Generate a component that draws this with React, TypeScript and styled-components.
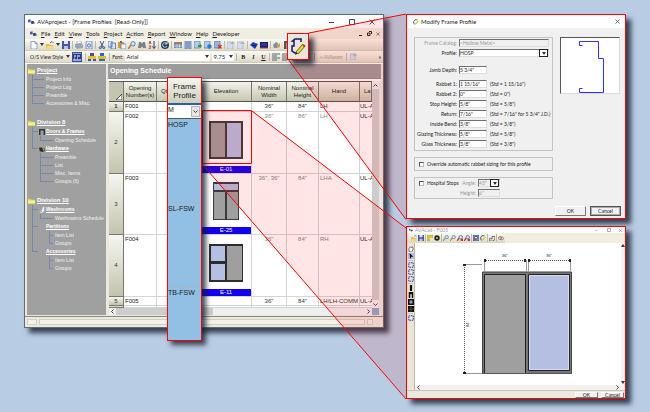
import React from "react";
import styled, { createGlobalStyle, css } from "styled-components";

const GlobalStyle = createGlobalStyle`
  * { box-sizing: border-box; }
  body { margin: 0; background: #b8cce4; font-family: "Liberation Sans", Arial, sans-serif; color: #222; }
  button, input, select { font: inherit; color: inherit; margin: 0; padding: 0; border: 0; border-radius: 0; background: none; min-width: 0; }
  svg { display: block; flex: none; }
  a { color: inherit; }
  ul { list-style: none; margin: 0; padding: 0; }
`;

const ui = `"Lato", "Liberation Sans", sans-serif`;

/* ---------- small drawings ---------- */

const glyphs: Record<string, React.ReactNode> = {
  app: <><path d="M0 2h3v3H0z" fill="#3b5fa8" /><path d="M3 4l3-1 2 3-4 1z" fill="#34466e" /><path d="M1 1h2v1H1z" fill="#8aa2d6" /></>,
  new: <><path d="M1 .5h4l2 2V8H1z" fill="#fff" stroke="#6c83b5" strokeWidth=".7" /><path d="M5 .5v2h2" fill="none" stroke="#6c83b5" strokeWidth=".7" /></>,
  open: <><path d="M0 3h3l1 1h3v4H0z" fill="#e7b93c" /><path d="M1 5h7L6.500 8H0z" fill="#f6d97c" /><path d="M4 2l2-1.500L7.500 2" fill="none" stroke="#3c66b8" /></>,
  save: <><path d="M0 0h8v8H0z" fill="#4458a6" /><path d="M2 0h4v3H2z" fill="#dfe6f8" /><path d="M2 5h4v3H2z" fill="#b8c4e6" /></>,
  print: <><path d="M2 0h4l1 3H2z" fill="#fff" stroke="#8b93a5" strokeWidth=".6" /><path d="M0 3l6-1 2 2v3L2 8 0 6z" fill="#9ba3b8" /></>,
  preview: <><path d="M2 0h5v8H1V1z" fill="#dfe9fa" stroke="#5d83c0" strokeWidth=".8" /><circle cx="4" cy="4.500" r="1.600" fill="none" stroke="#335c9e" strokeWidth=".8" /></>,
  cut: <><path d="M2 0l3 6M6 0L3 6" stroke="#40527d" fill="none" /><circle cx="2.300" cy="6.700" r="1" fill="none" stroke="#2a4daa" /><circle cx="5.700" cy="6.700" r="1" fill="none" stroke="#2a4daa" /></>,
  copy: <><path d="M0 0h4v6H0zM3 2h4.500v6H3z" fill="#d9e5fb" stroke="#456fb8" strokeWidth=".8" /></>,
  paste: <><path d="M0 1h6v6H0z" fill="#d9993b" /><path d="M2 0h2v2H2z" fill="#6d6a62" /><path d="M3 3h5v5H3z" fill="#f4f6fc" stroke="#5577b7" strokeWidth=".7" /></>,
  find: <><path d="M0 8l3-4" stroke="#c9773a" strokeWidth="1.500" /><circle cx="5" cy="2.800" r="2.200" fill="#d3e6fa" stroke="#4d75aa" strokeWidth=".9" /></>,
  binoc: <><path d="M1 1h2l1 2 1-2h2l1 6H5L4 5 3 7H0z" fill="#7a7f8c" /></>,
  sort: <><path d="M1 3l1-3 1 3M1 5h2L1 8h2" fill="none" stroke="#b23a36" strokeWidth=".9" /><path d="M6 0v7M4.500 5.500L6 7.500l1.500-2" fill="none" stroke="#2b3b6d" strokeWidth="1" /></>,
  refresh: <><circle cx="4" cy="4" r="4" fill="#25405a" /><path d="M6 3A2.300 2.300 0 1 0 6 5M6 1v2H4" fill="none" stroke="#e0eaf1" strokeWidth=".9" /></>,
  table: <><path d="M0 1h8v6H0z" fill="#6e8fca" /><path d="M0 1h8v2H0z" fill="#b07d4a" /><path d="M3 3v4M5.500 3v4M0 5h8" stroke="#e9effa" strokeWidth=".6" /></>,
  page: <><path d="M1 0h6v8H1z" fill="#a4bbe2" stroke="#5273ae" strokeWidth=".7" /><path d="M2 2h4M2 4h4M2 6h4" stroke="#48659b" strokeWidth=".7" /></>,
  pageGo: <><path d="M0 0h6v7H0z" fill="#b5c8ea" stroke="#5273ae" strokeWidth=".7" /><path d="M4 4h2V2.500L8 5 6 7.500V6H4z" fill="#2f9a46" /></>,
  pageIn: <><path d="M0 0h6v7H0z" fill="#b5c8ea" stroke="#5273ae" strokeWidth=".7" /><circle cx="5.500" cy="5.500" r="2.200" fill="#3777c9" /></>,
  pageDel: <><path d="M0 0h6v7H0z" fill="#9fb3da" stroke="#5273ae" strokeWidth=".7" /><path d="M4 4l3.500 3.500M7.500 4L4 7.500" stroke="#c3302b" strokeWidth="1.200" /></>,
  faded: <><path d="M0 1h6v7H0z" fill="#d5dcea" stroke="#9fb0cc" strokeWidth=".7" /><path d="M3 3l3-3 2 3z" fill="#a9b8d0" /></>,
  tag: <><path d="M0 4l3-3 5 2-3 5z" fill="#1e3fc4" /><path d="M2 4l4 1" stroke="#081c76" /></>,
  book: <><path d="M0 1h8v6H0z" fill="#1a1e5e" /><path d="M1 2h6v3H1z" fill="#2c35a0" /><path d="M0 7h8" stroke="#a44" /></>,
  gear: <><path d="M0 4l3-3 2 1-1 5H1z" fill="#7f8cae" /><path d="M4 4l3-2v4L4 7z" fill="#d7a13a" /></>,
  door: <><path d="M1 0h6v8H1z" fill="#555" /><path d="M3 2h2v6H3z" fill="#999" /></>,
  grid: <><path d="M0 1h8v5H0z" fill="#2a3c7a" /><path d="M1 3h2M4 3h3M1 5h1M4 5h1" stroke="#fff" /></>,
  treeA: <><path d="M2 0h4v3H2zM0 5h3v3H0zM5 5h3v3H5z" fill="#2b55c7" /><path d="M0 3h8v3H0z" fill="#eac41f" /><path d="M3 0l3 3" stroke="#d22" /></>,
  treeB: <><path d="M2 0h4v3H2zM1 5h6v3H1z" fill="#2768cf" /><path d="M0 3h8v3H0z" fill="#e4bd20" /></>,
  left: <path d="M0 1h8M0 3h5M0 5h8M0 7h5" stroke="#4b5066" strokeWidth=".9" />,
  folder: <><path d="M0 2h3l1 1h4v5H0z" fill="#ddd65c" /><path d="M0 4h8v3H0z" fill="#f5f08b" /></>,
  frame: <path d="M0 0h8v8H6V2H2v6H0z" fill="#333" />,
  lock: <><path d="M0 2h4l1 2 2-1 1 3-3 2-4-1z" fill="#332f24" /><path d="M5 4h2v2H5z" fill="#bfa52e" /></>,
  wash: <><path d="M5 0h2v5L4 8 1 7V5l3-1z" fill="#eee" /><path d="M1 5l3 1" stroke="#777" /></>,
  hand: <path d="M1 4l2-3 1 1 2-1 1 3-2 4H2z" fill="#fff" stroke="#333" strokeWidth=".9" />,
  arrow: <><path d="M0 0h8v8H0z" fill="#a9bde6" /><path d="M2 0l5 5H4.500L3 8z" fill="#111" /></>,
  box: <path d="M1 1h6v6H1z" fill="none" stroke="#2b43b5" strokeWidth="1.400" strokeDasharray="2 1" />,
  post: <path d="M2.500 0h3v8h-3z" fill="#111" />,
  jamb: <path d="M1 0h6v8H5V3H3v5H1z" fill="#111" />,
  window: <><path d="M0 0h8v8H0z" fill="#111" /><path d="M2 2h4v4H2z" fill="#79a7d8" /></>,
  zoomBox: <><path d="M0 0h8v8H0z" fill="#86a4dc" stroke="#29468f" /><circle cx="4" cy="3.500" r="2" fill="#fff" stroke="#222" /><path d="M2 7l1-2" stroke="#222" /></>,
  quad: <><path d="M0 0h8v8H0z" fill="#111" /><path d="M4 0v8M0 4h8" stroke="#777" strokeWidth=".7" /></>,
  swatch: <><path d="M0 0h8v3H3v5H0z" fill="#e6d12f" stroke="#77691c" strokeWidth=".5" /></>,
  disc: <><circle cx="4" cy="4" r="3.600" fill="#222" /><circle cx="4" cy="4" r="1.300" fill="#e5d84f" /></>,
  zoomRed: <><path d="M0 8l3-4" stroke="#c33" strokeWidth="1.800" /><circle cx="5" cy="3" r="2.300" fill="#d3e6fa" stroke="#36589a" strokeWidth=".9" /><path d="M5 5h3v3H5z" fill="#c33" /></>,
  sketch: <><path d="M0 5h4V2h4v4L5 8H0z" fill="#ddd" stroke="#333" strokeWidth=".8" /></>,
  rings: <><circle cx="2.700" cy="4" r="2" fill="none" stroke="#b55" /><circle cx="5.300" cy="4.500" r="2" fill="none" stroke="#777" /></>,
  pencilProfile: <><path d="M6 1H2.500L1 3v3l1.500 1" fill="none" stroke="#225" /><path d="M7.500 2.500L3 7" stroke="#dcc21e" strokeWidth="1.500" /></>,
};

const Glyph = ({ name, size = 8 }: { name: string; size?: number }) => (
  <svg width={size} height={size} viewBox="0 0 8 8" aria-hidden="true">{glyphs[name]}</svg>
);

const Caret = ({ up }: { up?: boolean }) => (
  <svg width="4" height="3" viewBox="0 0 4 3" aria-hidden="true"><path d={up ? "M0 3h4L2 0z" : "M0 0h4L2 3z"} fill="#333" /></svg>
);
const Cross = ({ size = 6 }: { size?: number }) => (
  <svg width={size} height={size} viewBox="0 0 6 6" aria-hidden="true"><path d="M.5.5l5 5M5.500.5l-5 5" stroke="#333" strokeWidth=".8" /></svg>
);
const Chevron = ({ d }: { d: string }) => (
  <svg width="5" height="5" viewBox="0 0 5 5" aria-hidden="true"><path d={d} fill="none" stroke="#444" /></svg>
);

/* ---------- desktop ---------- */

const Desktop = styled.main`
  position: relative;
  min-height: 100vh;
  display: grid;
  grid-template-columns: minmax(0, 360fr) minmax(0, 220fr);
  column-gap: 22px;
  align-items: start;
  padding: 14px 24px 12px;
`;
const Dialogs = styled.div`
  position: relative;
  z-index: 2;
  display: flex;
  flex-direction: column;
  gap: 7px;
`;
const shadow = css`box-shadow: 5px 5px 5px rgba(20, 30, 45, 0.8);`;

const AppWindow = styled.section`
  position: relative;
  border: 1px solid #606a78;
  background: #ece9dc;
  ${shadow}
`;
const TitleBar = styled.header`
  display: flex;
  align-items: center;
  gap: 2px;
  height: 13px;
  padding: 0 8px 0 3px;
  background: #fff;
  font: 6px/8px ${ui};
  white-space: pre;
`;
const WindowButtons = styled.div<{ $gap: number }>`
  display: flex;
  align-items: center;
  gap: ${(p) => p.$gap}px;
  margin-left: auto;
  button { display: block; }
`;
const MenuBar = styled.nav`
  display: flex;
  align-items: center;
  gap: 4px;
  height: 11px;
  padding: 0 3px 0 5px;
  background: #f0eee2;
  font: 6px/8px ${ui};
  button::first-letter { text-decoration: underline; }
`;
const Toolbar = styled.div<{ $small?: boolean }>`
  display: flex;
  align-items: center;
  gap: 2px;
  height: 12px;
  padding: 0 2px 0 5px;
  background: linear-gradient(#faf9f3, #dedac8);
  border-bottom: 1px solid #cfccba;
  font: ${(p) => (p.$small ? 5 : 6)}px/8px ${ui};
  white-space: nowrap;
`;
const ToolButton = styled.button<{ $on?: boolean; $wide?: boolean }>`
  display: flex;
  align-items: center;
  justify-content: center;
  flex: none;
  height: 10px;
  margin-right: ${(p) => (p.$wide ? 1 : 0)}px;
  ${(p) => p.$on && css`padding: 0 1px; background: #8fa9dc; outline: 1px solid #31509b; outline-offset: -1px;`}
`;
const Letter = styled.button<{ $kind: string }>`
  width: 8px;
  font: bold 6px/8px "Liberation Serif", serif;
  font-style: ${(p) => (p.$kind === "I" ? "italic" : "normal")};
  text-decoration: ${(p) => (p.$kind === "U" ? "underline" : "none")};
`;
const Rule = styled.i<{ $gap?: number }>`
  flex: none;
  width: 1px;
  height: 8px;
  margin: 0 ${(p) => p.$gap ?? 0}px;
  background: #bdbaa9;
`;
const Combo = styled.span<{ $w: number }>`
  display: flex;
  flex: none;
  align-items: center;
  width: ${(p) => p.$w}px;
  height: 9px;
  padding: 0 1px;
  background: #fff;
  font-size: 6px;
  select { flex: 1; appearance: none; height: 8px; outline: 0; }
`;
const Muted = styled.button`
  color: #a5a196;
  font-style: italic;
`;
const More = styled.button`
  margin-left: auto;
  font-weight: bold;
`;

/* ---------- workspace ---------- */

const Workspace = styled.div`
  display: grid;
  grid-template-columns: 79px minmax(0, 1fr);
  column-gap: 2px;
  padding: 0 2px 1px;
  border-top: 1px solid #fff;
  border-bottom: 1px solid #8a8a84;
`;
const TreePanel = styled.nav`
  padding: 2px 1px 0;
  background: #a0a0a0;
  color: #fff;
  font-size: 5px;
  line-height: 8px;
  white-space: nowrap;
`;
const Root = styled.div`margin-bottom: 11px;`;
const Heading = styled.a<{ $root?: boolean }>`
  display: flex;
  align-items: center;
  gap: 2px;
  height: 9px;
  font-weight: bold;
  font-size: ${(p) => (p.$root ? 6 : 5)}px;
  line-height: 9px;
`;
const IconSlot = styled.span`
  display: flex;
  flex: none;
  width: 4px;
  justify-content: center;
`;
const Branches = styled.ul<{ $inset: number }>`margin-left: ${(p) => p.$inset}px;`;
const line = "linear-gradient(#7587ad, #7587ad)";
const Branch = styled.li<{ $reach: number }>`
  padding-left: ${(p) => p.$reach}px;
  background: ${line} 0 0 / 1px 100% no-repeat, ${line} 0 4px / ${(p) => p.$reach - 2}px 1px no-repeat;
  &:last-child {
    background: ${line} 0 0 / 1px 5px no-repeat, ${line} 0 4px / ${(p) => p.$reach - 2}px 1px no-repeat;
  }
`;
const Leaf = styled.a`
  display: block;
  color: #f1f1f1;
  text-decoration: none;
`;
const Sheet = styled.div`
  display: flex;
  flex-direction: column;
  min-width: 0;
  background: #fff;
`;
const SheetTitle = styled.h1`
  margin: 0 0 2px;
  padding: 0 2px;
  background: #9c9c9c;
  border-bottom: 1px solid #8c8c8c;
  color: #fff;
  font-size: 7px;
  line-height: 14px;
  white-space: nowrap;
`;
const SheetBody = styled.div`
  display: grid;
  grid-template-columns: minmax(0, 1fr) 7px;
  padding: 0 2px 0 1px;
  background: #e9e7df;
`;
const TableClip = styled.div`
  background: #fff;
  border-top: 1px solid #555;
`;
const Table = styled.table`
  width: 100%;
  table-layout: fixed;
  border-spacing: 0;
  font-size: 6px;
  line-height: 7px;
  th, td { padding: 0; white-space: nowrap; }
`;
const HeadCell = styled.th<{ $start?: boolean }>`
  height: 20px;
  font-weight: normal;
  text-align: ${(p) => (p.$start ? "left" : "center")};
  && { padding-left: ${(p) => (p.$start ? 4 : 0)}px; }
  background: linear-gradient(#f2f2ea, #c6c7b2);
  border-right: 1px solid #77776c;
  border-bottom: 1px solid #55554c;
`;
const Corner = styled(HeadCell)`
  background: #c4c5ae;
  vertical-align: bottom;
  svg { margin: 0 1px 1px auto; }
`;
const RowHead = styled.th<{ $bold?: boolean }>`
  color: #333;
  font-weight: ${(p) => (p.$bold ? "bold" : "normal")};
  background: linear-gradient(#f6f6f2, #c3c4ad);
  border-right: 1px solid #77776c;
  border-bottom: 1px solid #77776c;
`;
const Row = styled.tr<{ $h: number; $dim?: boolean }>`
  height: ${(p) => p.$h}px;
  color: ${(p) => (p.$dim ? "#858585" : "#333")};
`;
const Cell = styled.td<{ $align?: string; $dark?: boolean; $edge?: boolean }>`
  vertical-align: top;
  text-align: ${(p) => p.$align ?? "left"};
  color: ${(p) => (p.$dark ? "#222" : "inherit")};
  border-right: ${(p) => (p.$edge ? 0 : 1)}px solid #d4d4d4;
  border-bottom: 1px solid #d4d4d4;
  && { padding-left: ${(p) => (p.$align || p.$edge ? 0 : 1)}px; padding-top: 1px; }
`;
const ElevationCell = styled(Cell)`
  vertical-align: bottom;
  && { padding: 0; }
  svg { margin: 0 auto 7px; }
`;
const Tag = styled.a`
  display: block;
  background: #1400f0;
  color: #fff;
  text-align: center;
  text-decoration: none;
  line-height: 7px;
`;
const VScroll = styled.div`
  display: flex;
  flex-direction: column;
  align-items: stretch;
  background: #f0f0f0;
  button { height: 8px; display: grid; place-items: center; }
`;
const Thumb = styled.div<{ $pct?: number }>`
  background: #cdcdcd;
  ${(p) => (p.$pct ? css`width: ${p.$pct}%;` : css`flex: 1;`)}
`;
const HScroll = styled.div`
  display: flex;
  height: 7px;
  background: #f0f0f0;
  button { width: 7px; display: grid; place-items: center; }
`;
const Track = styled.div`display: flex; flex: 1;`;
const Grip = styled.div`background: #94a9cf;`;
const StatusBar = styled.footer`
  display: flex;
  align-items: center;
  gap: 2px;
  height: 10px;
  padding: 0 10px 0 2px;
  background: #eceadf;
  span { height: 6px; border: 1px solid #d2d0c4; background: #f3f2ea; }
  span:nth-child(1) { width: 10px; }
  span:nth-child(2) { flex: 1; }
  span:nth-child(3) { width: 6px; }
`;

/* ---------- callouts ---------- */

const Cones = styled.svg`
  position: absolute;
  inset: 0;
  width: 100%;
  height: 412px;
  z-index: 1;
  pointer-events: none;
`;
const IconCallout = styled.button`
  && {
    position: absolute;
    z-index: 2;
    top: 18px;
    left: 262px;
    width: 22px;
    height: 27px;
    display: grid;
    place-items: center;
    background: #e9e6dc;
    border: 1px solid #f00;
    ${shadow}
  }
`;
const ProfilePicker = styled.div`
  position: absolute;
  z-index: 2;
  top: 62px;
  left: 142px;
  width: 35px;
  border: 1px solid #f00;
  background: #91c0e4;
  box-shadow: 4px 4px 5px rgba(20, 30, 45, 0.8);
  font-size: 7px;
  line-height: 10px;
`;
const PickerHead = styled.label`
  display: block;
  padding: 4px 0 3px;
  background: linear-gradient(#f4f4ee, #cfcfbd);
  border-bottom: 2px solid #2f5da5;
  font-size: 8px;
  line-height: 9px;
  text-align: center;
`;
const PickerSelect = styled.span`
  display: flex;
  height: 14px;
  background: #fff;
  border-bottom: 1px solid #555;
  select { flex: 1; height: 10px; appearance: none; outline: 0; }
`;
const PickerArrow = styled.span`
  display: grid;
  place-items: center;
  width: 9px;
  margin: 1px;
  background: #e6e6e6;
  border: 1px solid #b5b5b5;
`;
const Option = styled.li<{ $h: number }>`
  height: ${(p) => p.$h}px;
  padding-top: 1px;
  border-bottom: 1px solid #a8b6bd;
  &:last-child { border-bottom: 0; }
`;

/* ---------- profile dialog ---------- */

const Dialog = styled.section`
  border: 1px solid #f00;
  background: #f0f0f0;
  color: #222;
  font: 5px/8px ${ui};
  ${shadow}
`;
const DialogTitle = styled(TitleBar)`padding: 0 5px 0 6px;`;
const DialogBody = styled.div`
  display: grid;
  grid-template-columns: minmax(0, 139fr) minmax(0, 60fr);
  column-gap: 7px;
  align-items: start;
  padding: 9px 5px 7px 7px;
`;
const Groups = styled.div`display: flex; flex-direction: column; gap: 6px;`;
const Group = styled.fieldset<{ $pad?: string }>`
  min-width: 0;
  margin: 0;
  padding: ${(p) => p.$pad ?? "1px 3px"};
  border: 1px solid #c4c4c4;
`;
const FieldRow = styled.div<{ $top?: number; $off?: boolean }>`
  display: grid;
  grid-template-columns: 41px minmax(0, 1fr);
  column-gap: 2px;
  align-items: center;
  height: 10px;
  margin-top: ${(p) => p.$top ?? 0}px;
  color: ${(p) => (p.$off ? "#999" : "inherit")};
  white-space: nowrap;
  label { text-align: right; }
`;
const Entry = styled.span`display: flex; align-items: center; gap: 3px;`;
const sunk = css`
  height: 8px;
  background: #fff;
  border: 1px solid #ddd;
  border-top-color: #707070;
  border-left-color: #707070;
`;
const Field = styled.input<{ $w?: number; $off?: boolean }>`
  && {
    ${sunk}
    flex: none;
    width: ${(p) => (p.$w ? p.$w + "px" : "100%")};
    ${(p) => p.$off && css`background: #f0f0f0;`}
  }
`;
const DropField = styled.span<{ $w?: number; $off?: boolean }>`
  ${sunk}
  display: flex;
  width: ${(p) => (p.$w ? p.$w + "px" : "100%")};
  ${(p) => p.$off && css`background: #f0f0f0;`}
  select { flex: 1; height: 6px; line-height: 6px; appearance: none; opacity: 1; }
`;
const DropArrow = styled.span`
  display: grid;
  place-items: center;
  width: 9px;
  height: 8px;
  margin: -1px 0;
  border: 1px solid #222;
  background: #fff;
`;
const Check = styled.label`
  display: flex;
  align-items: center;
  gap: 3px;
  height: 10px;
  white-space: nowrap;
  input { flex: none; appearance: none; width: 5px; height: 5px; background: #fff; border: 1px solid #bbb; border-top-color: #555; border-left-color: #555; }
`;
const Stops = styled.div`
  display: grid;
  grid-template-columns: 40px auto;
  align-items: start;
  justify-content: start;
`;
const StopRow = styled(FieldRow)`grid-template-columns: 17px 22px;`;
const Preview = styled.div`
  background: #fff;
  border: 1px solid #ddd;
  border-top-color: #555;
  border-left-color: #555;
`;
const DialogActions = styled.div`
  display: flex;
  justify-content: flex-end;
  gap: 4px;
  padding: 0 4px 2px;
`;
const PushButton = styled.button<{ $focus?: boolean; $small?: boolean }>`
  && {
    width: ${(p) => (p.$small ? 23 : 31)}px;
    height: ${(p) => (p.$small ? 6 : 10)}px;
    line-height: ${(p) => (p.$small ? 4 : 8)}px;
    background: #f0f0f0;
    border: 1px solid #fff;
    border-right-color: #777;
    border-bottom-color: #777;
    ${(p) => p.$focus && css`border-color: #555; outline: 1px solid #aaa; outline-offset: -2px;`}
  }
`;

/* ---------- drawing window ---------- */

const CadTitle = styled(TitleBar)`
  height: 6px;
  padding: 0 3px 0 2px;
  color: #999;
  font: 5px/6px ${ui};
`;
const CadToolbar = styled.div`
  display: flex;
  height: 10px;
  background: #f1eee0;
`;
const CadTray = styled.div`
  display: flex;
  align-items: center;
  gap: 1px;
  width: 98px;
  padding: 0 4px;
  background: linear-gradient(#faf9f3, #dcd8c4);
`;
const CadBody = styled.div`
  display: grid;
  grid-template-columns: 8px minmax(0, 1fr) 4px;
  background: #fff;
`;
const CadTools = styled.div`
  display: flex;
  flex-direction: column;
  align-items: center;
  gap: 1px;
  padding-top: 3px;
  background: #eae7d8;
  border-right: 1px solid #bdb9a4;
  button { height: 6px; }
`;
const CadDivider = styled.i`
  width: 5px;
  height: 1px;
  background: #c9c5b2;
`;
const CadCanvas = styled.div`
  display: flex;
  flex-direction: column;
  min-width: 0;
  overflow: hidden;
`;
const CadVScroll = styled.div`
  display: flex;
  flex-direction: column;
  justify-content: space-between;
  align-items: center;
  padding: 1px 0 6px;
  background: #f3f3f3;
`;
const CadHScroll = styled.div`
  display: flex;
  justify-content: space-between;
  align-items: center;
  height: 5px;
  padding: 0 1px;
  background: #f0f0f0;
`;
const CadFooter = styled.footer`
  display: flex;
  align-items: center;
  justify-content: flex-end;
  gap: 3px;
  height: 8px;
  padding: 0 1px;
  background: #eceadf;
  border-top: 1px solid #c9c6b6;
`;

/* ---------- data ---------- */

const menus = ["File", "Edit", "View", "Tools", "Project", "Action", "Report", "Window", "Help", "Developer"];

type TreeNode = { text: string; icon?: string; kids?: string[] };
const tree: { text: string; nodes: TreeNode[] }[] = [
  { text: "Project", nodes: [{ text: "Project Info" }, { text: "Project Log" }, { text: "Preamble" }, { text: "Accessories & Misc." }] },
  {
    text: "Division 8",
    nodes: [
      { text: "Doors & Frames", icon: "frame", kids: ["Opening Schedule"] },
      { text: "Hardware", icon: "lock", kids: ["Preamble", "List", "Misc. Items", "Groups (6)"] },
    ],
  },
  {
    text: "Division 10",
    nodes: [
      { text: "Washrooms", icon: "wash", kids: ["Washrooms Schedule"] },
      { text: "Partitions", kids: ["Item List", "Groups"] },
      { text: "Accessories", kids: ["Item List", "Groups"] },
    ],
  },
];

const gray = "#9f9f9f";
const blue = "#b4bfe2";
const ElevA = () => (
  <svg width="34" height="38" viewBox="0 0 34 38"><path d="M0 0h34v38H0z" fill="#3a3a3a" /><path d="M2 2h14v34H2z" fill={gray} /><path d="M18 2h14v34H18z" fill={blue} /></svg>
);
const ElevB = () => (
  <svg width="26" height="38" viewBox="0 0 26 38"><path d="M0 0h26v38H0z" fill="#3a3a3a" /><path d="M1 2h24v6H1z" fill={blue} /><path d="M1 10h11v27H1zM14 10h11v27H14z" fill={gray} /></svg>
);
const ElevC = () => (
  <svg width="34" height="38" viewBox="0 0 34 38"><path d="M0 0h34v38H0z" fill="#2c2c2c" /><path d="M2 2h14v15H2zM2 20h14v16H2z" fill={blue} /><path d="M18 2h15v34H18z" fill={gray} /></svg>
);

const rows = [
  { n: 1, h: 10, id: "F001", w: "36\"", t: "84\"", hand: "LH", label: "UL-A" },
  { n: 2, h: 62, id: "F002", w: "36\"", t: "86\"", hand: "LH", label: "UL-A", dim: true, tag: "E-01", art: <ElevA /> },
  { n: 3, h: 61, id: "F003", w: "36\", 36\"", t: "84\"", hand: "LHA", label: "UL-A", dim: true, tag: "E-25", art: <ElevB /> },
  { n: 4, h: 62, id: "F004", w: "36\"", t: "84\"", hand: "RH", label: "UL-A", dim: true, tag: "E-11", art: <ElevC /> },
  { n: 5, h: 9, id: "F005", w: "36\"", t: "84\"", hand: "LH/LH-COMM", label: "UL-A" },
];

const tools = ["new", "v", "open", "v", "save", "|", "print", "preview", "|", "cut", "copy", "paste", "find", "binoc", "sort", "|", "refresh", "|", "table", "page", "pageGo", "pageIn", "pageDel", "|", "faded", "faded", "|", "tag", "book", "|", "gear", "door"];

const sizes = [
  ["Rabbet 1:", "1 15/16\"", "(Std = 1 15/16\")"],
  ["Rabbet 2:", "0\"", "(Std = 0\")"],
  ["Stop Height:", "5/8\"", "(Std = 5/8\")"],
  ["Return:", "7/16\"", "(Std = 7/16\" for 5 3/4\" J.D.)"],
  ["Inside Bend:", "3/8\"", "(Std = 3/8\")"],
  ["Glazing Thickness:", "5/8\"", "(Std = 5/8\")"],
  ["Glass Thickness:", "3/8\"", "(Std = 3/8\")"],
];

const cadBar = ["open", "save", "|", "swatch", "disc", "|", "find", "find", "zoomRed", "zoomRed", "|", "zoomBox", "pencilProfile", "|", "sketch", "|", "rings"];
const cadSide = ["hand", "arrow", "|", "box", "box", "box", "|", "post", "jamb", "window", "quad", "|", "box"];

/* ---------- parts ---------- */

function Navigator() {
  return (
    <TreePanel aria-label="Project tree">
      {tree.map((root) => (
        <Root key={root.text}>
          <Heading $root href="#"><Glyph name="folder" size={7} />{root.text}</Heading>
          <Branches $inset={4}>
            {root.nodes.map((node) =>
              node.kids ? (
                <Branch key={node.text} $reach={8}>
                  <Heading href="#"><IconSlot>{node.icon && <Glyph name={node.icon} size={6} />}</IconSlot>{node.text}</Heading>
                  <Branches $inset={node.icon ? 0 : 9}>
                    {node.kids.map((kid) => <Branch key={kid} $reach={node.icon ? 15 : 6}><Leaf href="#">{kid}</Leaf></Branch>)}
                  </Branches>
                </Branch>
              ) : (
                <Branch key={node.text} $reach={14}><Leaf href="#">{node.text}</Leaf></Branch>
              )
            )}
          </Branches>
        </Root>
      ))}
    </TreePanel>
  );
}

function Schedule() {
  return (
    <Sheet>
      <SheetTitle>Opening Schedule</SheetTitle>
      <SheetBody>
        <TableClip>
          <Table>
            <colgroup>
              {[15, 33, 44, 51, 35, 32, 41].map((w, i) => <col key={i} width={w} />)}
              <col />
            </colgroup>
            <thead>
              <tr>
                <Corner><svg width="6" height="6" viewBox="0 0 6 6"><path d="M6 0v6H0z" fill="#fff" stroke="#222" strokeWidth=".8" /></svg></Corner>
                <HeadCell>Opening<br />Number(s)</HeadCell>
                <HeadCell $start>Qty</HeadCell>
                <HeadCell>Elevation</HeadCell>
                <HeadCell>Nominal<br />Width</HeadCell>
                <HeadCell>Nominal<br />Height</HeadCell>
                <HeadCell>Hand</HeadCell>
                <HeadCell $start>La</HeadCell>
              </tr>
            </thead>
            <tbody>
              {rows.map((r) => (
                <Row key={r.n} $h={r.h} $dim={r.dim}>
                  <RowHead $bold={r.n === 1}>{r.n}</RowHead>
                  <Cell $dark>{r.id}</Cell>
                  <Cell />
                  <ElevationCell>{r.art}{r.tag && <Tag href="#">{r.tag}</Tag>}</ElevationCell>
                  <Cell $align="center">{r.w}</Cell>
                  <Cell $align="center">{r.t}</Cell>
                  <Cell>{r.hand}</Cell>
                  <Cell $dark $edge>{r.label}</Cell>
                </Row>
              ))}
              <Row $h={2}><RowHead /><Cell /><Cell /><Cell /><Cell /><Cell /><Cell /><Cell $edge /></Row>
            </tbody>
          </Table>
        </TableClip>
        <VScroll>
          <button aria-label="Scroll up"><Chevron d="M.5 3.500l2-2 2 2" /></button>
          <Thumb />
          <button aria-label="Scroll down"><Chevron d="M.5 1.500l2 2 2-2" /></button>
        </VScroll>
        <HScroll>
          <button aria-label="Scroll left"><Chevron d="M3.500.5l-2 2 2 2" /></button>
          <Track><Thumb $pct={39} /></Track>
          <button aria-label="Scroll right"><Chevron d="M1.500.5l2 2-2 2" /></button>
        </HScroll>
        <Grip />
      </SheetBody>
    </Sheet>
  );
}

function ProjectWindow() {
  return (
    <AppWindow>
      <TitleBar>
        <Glyph name="app" size={7} />
        <span>AVAproject - [Frame Profiles  [Read-Only]]</span>
        <WindowButtons $gap={14}>
          <button aria-label="Minimize"><svg width="6" height="6"><path d="M0 3.500h5" stroke="#444" /></svg></button>
          <button aria-label="Maximize"><svg width="6" height="6"><path d="M.5.5h5v5h-5z" fill="none" stroke="#444" /></svg></button>
          <button aria-label="Close"><Cross /></button>
        </WindowButtons>
      </TitleBar>
      <MenuBar>
        <Glyph name="app" size={7} />
        {menus.map((m) => <button key={m}>{m}</button>)}
        <WindowButtons $gap={4}>
          <button aria-label="Minimize sheet"><svg width="4" height="5"><path d="M0 4.500h3" stroke="#222" /></svg></button>
          <button aria-label="Restore sheet"><svg width="5" height="5"><path d="M2 .5h2.500v2.500M.5 2h2.500v2.500h-2.500z" fill="none" stroke="#222" /></svg></button>
          <button aria-label="Close sheet"><Cross size={4} /></button>
        </WindowButtons>
      </MenuBar>
      <Toolbar role="toolbar">
        {tools.map((t, i) =>
          t === "|" ? <Rule key={i} /> :
          t === "v" ? <Caret key={i} /> :
          <ToolButton key={i} aria-label={t}><Glyph name={t} /></ToolButton>
        )}
      </Toolbar>
      <Toolbar role="toolbar" $small>
        <ToolButton $wide>O/S View Style</ToolButton><Caret />
        <ToolButton $on $wide aria-label="Grid view"><Glyph name="grid" /></ToolButton><Rule />
        <ToolButton aria-label="Expand"><Glyph name="treeA" /></ToolButton>
        <ToolButton $wide aria-label="Collapse"><Glyph name="treeB" /></ToolButton>
        <Rule /><label htmlFor="font">Font:</label>
        <Combo $w={85}><select id="font"><option>Arial</option></select><Caret /></Combo>
        <Combo $w={22}><select aria-label="Font size"><option>9.75</option></select><Caret /></Combo>
        <Rule />
        {["B", "I", "U"].map((k) => <Letter key={k} $kind={k}>{k}</Letter>)}
        <Rule />
        {[1, 2, 3, 4].map((k) => <ToolButton key={k} aria-label={"Align " + k}><Glyph name="left" /></ToolButton>)}
        <Rule $gap={2} />
        <Muted>∞ AVAware</Muted><Rule $gap={1} />
        <ToolButton aria-label="Export"><Glyph name="faded" size={7} /></ToolButton>
        <More aria-label="More buttons">»</More>
      </Toolbar>
      <Workspace><Navigator /><Schedule /></Workspace>
      <StatusBar><span /><span /><span /></StatusBar>

      <IconCallout aria-label="Modify frame profile">
        <svg width="18" height="22" viewBox="0 0 18 22">
          <path d="M12 6V3H6L3.500 5H5v5H3v5l3 2h2" fill="none" stroke="#17176b" strokeWidth="1.500" />
          <path d="M15 9l-7 8" stroke="#5e5518" strokeWidth="3.600" />
          <path d="M15 9l-7 8" stroke="#eddc33" strokeWidth="2.200" />
          <path d="M14 9l2 1.500" stroke="#b8352a" strokeWidth="2" />
          <path d="M6 19l1-3 2 1.500z" fill="#222" />
        </svg>
      </IconCallout>
      <ProfilePicker>
        <PickerHead htmlFor="profile-picker">Frame<br />Profile</PickerHead>
        <PickerSelect>
          <select id="profile-picker"><option>M</option></select>
          <PickerArrow><Chevron d="M.5 1.500l2 2 2-2" /></PickerArrow>
        </PickerSelect>
        <ul>
          <Option $h={84}>HOSP</Option>
          <Option $h={84}>SL-FSW</Option>
          <Option $h={53}>TB-FSW</Option>
        </ul>
      </ProfilePicker>
    </AppWindow>
  );
}

function ProfileDialog() {
  return (
    <Dialog>
      <DialogTitle>
        <Glyph name="pencilProfile" size={6} /><span>Modify Frame Profile</span>
        <WindowButtons $gap={0}><button aria-label="Close"><Cross size={5} /></button></WindowButtons>
      </DialogTitle>
      <DialogBody>
        <Groups>
          <Group $pad="0 3px 1px 1px">
            <FieldRow $off><label htmlFor="cat">Frame Catalog:</label><Field id="cat" $off readOnly value="<Hollow Metal>" /></FieldRow>
            <FieldRow>
              <label htmlFor="prof">Profile:</label>
              <DropField><select id="prof"><option>HOSP</option></select><DropArrow><Caret /></DropArrow></DropField>
            </FieldRow>
            <FieldRow $top={7}><label htmlFor="jamb">Jamb Depth:</label><Field id="jamb" $w={28} defaultValue={'5 3/4"'} /></FieldRow>
            {sizes.map(([name, value, std], i) => (
              <FieldRow key={name} $top={i ? 0 : 4}>
                <label htmlFor={"size" + i}>{name}</label>
                <Entry><Field id={"size" + i} $w={28} defaultValue={value} />{std}</Entry>
              </FieldRow>
            ))}
          </Group>
          <Group $pad="1px 4px">
            <Check><input type="checkbox" />Override automatic rabbet sizing for this profile</Check>
          </Group>
          <Group $pad="0 4px">
            <Stops>
              <Check><input type="checkbox" />Hospital Stops</Check>
              <div>
                <StopRow $off>
                  <label htmlFor="angle">Angle:</label>
                  <DropField $w={22} $off><select id="angle"><option>45°</option></select><DropArrow><Caret /></DropArrow></DropField>
                </StopRow>
                <StopRow $off><label htmlFor="height">Height:</label><Field id="height" $w={22} $off readOnly value={'6"'} /></StopRow>
              </div>
            </Stops>
          </Group>
        </Groups>
        <Preview>
          <svg width="58" height="55" viewBox="0 0 58 55">
            <path d="M21.500 7.500h-3v-4h19v17h5v34h-24v-4h3" fill="none" stroke="#3030ff" />
          </svg>
        </Preview>
      </DialogBody>
      <DialogActions>
        <PushButton>OK</PushButton>
        <PushButton $focus>Cancel</PushButton>
      </DialogActions>
    </Dialog>
  );
}

function CadWindow() {
  return (
    <Dialog>
      <CadTitle>
        <Glyph name="app" size={4} /><span>AVAcad - F005</span>
        <WindowButtons $gap={8}>
          <button aria-label="Minimize"><svg width="4" height="4"><path d="M0 2.500h3" stroke="#ccc" /></svg></button>
          <button aria-label="Maximize"><svg width="4" height="4"><path d="M.5.5h3v3h-3z" fill="none" stroke="#aaa" /></svg></button>
          <button aria-label="Close"><Cross size={3} /></button>
        </WindowButtons>
      </CadTitle>
      <CadToolbar>
        <CadTray role="toolbar">
          {cadBar.map((n, i) => (n === "|" ? <Rule key={i} /> : <ToolButton key={i} aria-label={n}><Glyph name={n} size={6} /></ToolButton>))}
        </CadTray>
      </CadToolbar>
      <CadBody>
        <CadTools role="toolbar">
          {cadSide.map((n, i) => (n === "|" ? <CadDivider key={i} /> : <ToolButton key={i} aria-label={n}><Glyph name={n} size={6} /></ToolButton>))}
        </CadTools>
        <CadCanvas>
          <svg width="206" height="142" viewBox="415 244 206 142" role="img" aria-label="Frame elevation">
            <path d="M482 273h90v102h-90z" fill="#777" />
            <path d="M482.500 375v-102h89v102" fill="none" stroke="#444" />
            <path d="M484.500 275.500h41v99h-41z" fill="#9f9f9f" stroke="#222" />
            <path d="M528.500 275.500h41v96h-41z" fill={blue} stroke="#222" />
            <path d="M529.500 276.500h39v94h-39z" fill="none" stroke="#d6dcf2" />
            <path d="M482 374.500h90" stroke="#555" />
            <path d="M484 261.500h42M528 261.500h42M464.500 266v108" stroke="#555" strokeDasharray="1 1" />
            <path d="M484.500 261v12M526.500 261v12M528.500 261v12M570.500 261v12M464 265.500h18M464 374.500h18" stroke="#999" />
            <path d="M484 260h2v3h-2zM524 260h2v3h-2zM528 260h2v3h-2zM569 260h2v3h-2zM463 265h3v2h-3zM463 373h3v2h-3z" fill="#222" />
            <g fontSize="4" fill="#222" fontFamily="Liberation Sans, sans-serif" textAnchor="middle">
              <text x="505" y="258">36"</text>
              <text x="549" y="258">36"</text>
              <text transform="translate(469 325) rotate(-90)">84"</text>
            </g>
          </svg>
          <CadHScroll><Chevron d="M3.500.5l-2 2 2 2" /><Chevron d="M1.500.5l2 2-2 2" /></CadHScroll>
        </CadCanvas>
        <CadVScroll><Caret up /><Caret /></CadVScroll>
      </CadBody>
      <CadFooter><PushButton $small>OK</PushButton><PushButton $small>Cancel</PushButton></CadFooter>
    </Dialog>
  );
}

export default function App() {
  return (
    <>
      <GlobalStyle />
      <Desktop>
        <ProjectWindow />
        <Cones viewBox="0 0 650 412" preserveAspectRatio="none" aria-hidden="true">
          <path d="M309 33L406 14V220L288 59z" fill="#f00" fillOpacity=".1" />
          <path d="M202 110.500H252L406 228V399L202 164z" fill="#f00" fillOpacity=".1" />
          <g fill="none" stroke="#f00" strokeWidth="1">
            <path d="M309 33L406 14M288 59L406 219.500M252 111L406 228M202 164L406 399" />
            <path d="M202.500 110.500h49v53h-49z" />
          </g>
        </Cones>
        <Dialogs><ProfileDialog /><CadWindow /></Dialogs>
      </Desktop>
    </>
  );
}
